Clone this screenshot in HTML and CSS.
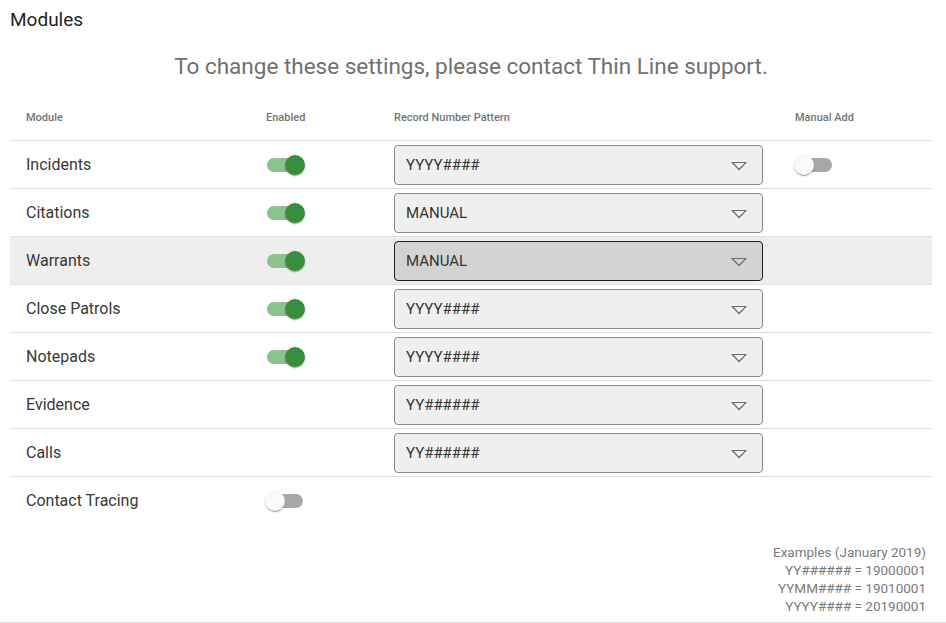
FILE: index.html
```html
<!DOCTYPE html>
<html>
<head>
<meta charset="utf-8">
<link rel="stylesheet" href="styles.css">
</head>
<body>
<div class="page">
  <h1 class="title">Modules</h1>
  <p class="notice">To change these settings, please contact Thin Line support.</p>
  <div class="table">
    <div class="row head">
      <div class="cell">Module</div>
      <div class="cell">Enabled</div>
      <div class="cell">Record Number Pattern</div>
      <div class="cell">Manual Add</div>
    </div>
    <div class="row">
      <div class="cell">Incidents</div>
      <div class="cell"><span class="switch on"><span class="track"></span><span class="thumb"></span></span></div>
      <div class="cell"><div class="select"><span>YYYY####</span><svg width="16" height="10" viewBox="0 0 16 10"><path d="M1 1.5 L15 1.5 L8 8.5 Z" fill="none" stroke="#6f6f6f" stroke-width="1.2" stroke-linejoin="round"/></svg></div></div>
      <div class="cell"><span class="switch"><span class="track"></span><span class="thumb"></span></span></div>
    </div>
    <div class="row">
      <div class="cell">Citations</div>
      <div class="cell"><span class="switch on"><span class="track"></span><span class="thumb"></span></span></div>
      <div class="cell"><div class="select"><span>MANUAL</span><svg width="16" height="10" viewBox="0 0 16 10"><path d="M1 1.5 L15 1.5 L8 8.5 Z" fill="none" stroke="#6f6f6f" stroke-width="1.2" stroke-linejoin="round"/></svg></div></div>
      <div class="cell"></div>
    </div>
    <div class="row hover">
      <div class="cell">Warrants</div>
      <div class="cell"><span class="switch on"><span class="track"></span><span class="thumb"></span></span></div>
      <div class="cell"><div class="select active"><span>MANUAL</span><svg width="16" height="10" viewBox="0 0 16 10"><path d="M1 1.5 L15 1.5 L8 8.5 Z" fill="none" stroke="#6f6f6f" stroke-width="1.2" stroke-linejoin="round"/></svg></div></div>
      <div class="cell"></div>
    </div>
    <div class="row">
      <div class="cell">Close Patrols</div>
      <div class="cell"><span class="switch on"><span class="track"></span><span class="thumb"></span></span></div>
      <div class="cell"><div class="select"><span>YYYY####</span><svg width="16" height="10" viewBox="0 0 16 10"><path d="M1 1.5 L15 1.5 L8 8.5 Z" fill="none" stroke="#6f6f6f" stroke-width="1.2" stroke-linejoin="round"/></svg></div></div>
      <div class="cell"></div>
    </div>
    <div class="row">
      <div class="cell">Notepads</div>
      <div class="cell"><span class="switch on"><span class="track"></span><span class="thumb"></span></span></div>
      <div class="cell"><div class="select"><span>YYYY####</span><svg width="16" height="10" viewBox="0 0 16 10"><path d="M1 1.5 L15 1.5 L8 8.5 Z" fill="none" stroke="#6f6f6f" stroke-width="1.2" stroke-linejoin="round"/></svg></div></div>
      <div class="cell"></div>
    </div>
    <div class="row">
      <div class="cell">Evidence</div>
      <div class="cell"></div>
      <div class="cell"><div class="select"><span>YY######</span><svg width="16" height="10" viewBox="0 0 16 10"><path d="M1 1.5 L15 1.5 L8 8.5 Z" fill="none" stroke="#6f6f6f" stroke-width="1.2" stroke-linejoin="round"/></svg></div></div>
      <div class="cell"></div>
    </div>
    <div class="row">
      <div class="cell">Calls</div>
      <div class="cell"></div>
      <div class="cell"><div class="select"><span>YY######</span><svg width="16" height="10" viewBox="0 0 16 10"><path d="M1 1.5 L15 1.5 L8 8.5 Z" fill="none" stroke="#6f6f6f" stroke-width="1.2" stroke-linejoin="round"/></svg></div></div>
      <div class="cell"></div>
    </div>
    <div class="row last">
      <div class="cell">Contact Tracing</div>
      <div class="cell"><span class="switch"><span class="track"></span><span class="thumb"></span></span></div>
      <div class="cell"></div>
      <div class="cell"></div>
    </div>
  </div>
  <div class="examples">
    <div>Examples (January 2019)</div>
    <div>YY###### = 19000001</div>
    <div>YYMM#### = 19010001</div>
    <div>YYYY#### = 20190001</div>
  </div>
</div>
</body>
</html>
```

FILE: styles.css
```css
html, body {
  margin: 0;
  padding: 0;
  background: #fff;
}

body {
  font-family: Roboto, "Liberation Sans", sans-serif;
  color: rgba(0, 0, 0, 0.87);
}

.page {
  padding: 8px 14px 7px 10px;
  border-bottom: 1px solid #dcdcdc;
}

.title {
  margin: 0;
  font-size: 19px;
  font-weight: 400;
  line-height: 24px;
  color: #1f1f1f;
}

.notice {
  margin: 19px 0 0;
  text-align: center;
  font-size: 22.5px;
  font-weight: 400;
  line-height: 30px;
  color: #707070;
}

.table {
  margin-top: 12px;
}

.row {
  display: grid;
  grid-template-columns: 240px 128px 401px 1fr;
  height: 47px;
  border-bottom: 1px solid #e0e0e0;
  font-size: 16px;
  color: #383838;
}

.row.last {
  border-bottom: none;
}

.row.hover {
  background: #eeeeee;
}

.row.head {
  font-size: 11px;
  font-weight: 500;
  color: #757575;
}

.row.head .cell {
  padding-top: 2px;
}

.cell {
  display: flex;
  align-items: center;
  padding: 0 16px;
  min-width: 0;
}

.select {
  flex: 1;
  height: 40px;
  box-sizing: border-box;
  border: 1px solid #8a8a8a;
  border-radius: 4px;
  background: #efefef;
  display: flex;
  align-items: center;
  justify-content: space-between;
  padding: 0 15px 0 11px;
  font-size: 15px;
  color: #333;
}

.select svg {
  display: block;
  margin-top: 2px;
}

.select.active {
  background: #d3d3d3;
  border-color: #1e1e1e;
}

.switch {
  position: relative;
  display: inline-block;
  width: 40px;
  height: 20px;
  margin-left: -1px;
}

.switch .track {
  position: absolute;
  left: 2px;
  top: 3px;
  width: 36px;
  height: 14px;
  border-radius: 7px;
  background: #a8a8a8;
}

.switch .thumb {
  position: absolute;
  left: 0;
  top: 0;
  width: 20px;
  height: 20px;
  border-radius: 50%;
  background: #fafafa;
  box-shadow: 0 2px 1px -1px rgba(0,0,0,0.2), 0 1px 1px 0 rgba(0,0,0,0.14), 0 1px 3px 0 rgba(0,0,0,0.12);
}

.switch.on .track {
  background: #8dc28f;
  width: 34px;
}

.switch.on .thumb {
  left: 20px;
  background: #388e3c;
}

.examples {
  margin-top: 19px;
  padding-right: 6px;
  text-align: right;
  font-size: 13.5px;
  line-height: 18px;
  color: #7a7a7a;
}
```
